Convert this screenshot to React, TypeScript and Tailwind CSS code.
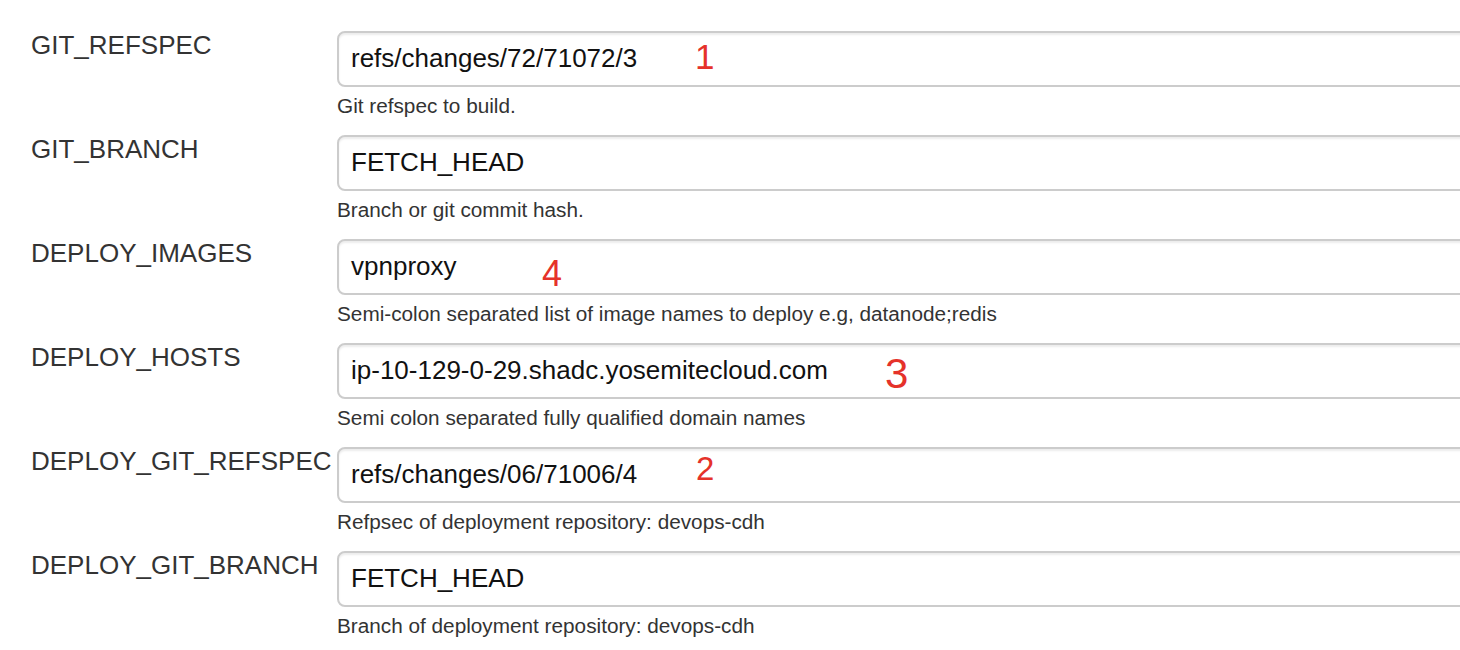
import React from 'react';

type Param = {
  name: string;
  value: string;
  help: string;
  mark?: { text: string; className: string };
};

const PARAMS: Param[] = [
  {
    name: 'GIT_REFSPEC',
    value: 'refs/changes/72/71072/3',
    help: 'Git refspec to build.',
    mark: { text: '1', className: 'left-[356px] top-[6px] text-[35px]' },
  },
  {
    name: 'GIT_BRANCH',
    value: 'FETCH_HEAD',
    help: 'Branch or git commit hash.',
  },
  {
    name: 'DEPLOY_IMAGES',
    value: 'vpnproxy',
    help: 'Semi-colon separated list of image names to deploy e.g, datanode;redis',
    mark: { text: '4', className: 'left-[203px] top-[15px] text-[36px]' },
  },
  {
    name: 'DEPLOY_HOSTS',
    value: 'ip-10-129-0-29.shadc.yosemitecloud.com',
    help: 'Semi colon separated fully qualified domain names',
    mark: { text: '3', className: 'left-[546px] top-[8px] text-[42px]' },
  },
  {
    name: 'DEPLOY_GIT_REFSPEC',
    value: 'refs/changes/06/71006/4',
    help: 'Refpsec of deployment repository: devops-cdh',
    mark: { text: '2', className: 'left-[357px] top-[3px] text-[33px]' },
  },
  {
    name: 'DEPLOY_GIT_BRANCH',
    value: 'FETCH_HEAD',
    help: 'Branch of deployment repository: devops-cdh',
  },
];

const ParamRow: React.FC<{ param: Param }> = ({ param }) => (
  <div className="flex items-start">
    <div className="w-[337px] shrink-0 pl-[31px] pt-[1px] text-[26px] leading-none text-[#333] whitespace-nowrap">
      {param.name}
    </div>
    <div className="w-[1200px] shrink-0 pb-[14.5px]">
      <div className="relative flex h-[56px] items-center rounded-[8px] border-2 border-[#cccccc] bg-white pl-[12px] text-[26px] text-[#111] shadow-[inset_0_2px_2px_rgba(0,0,0,0.075)]">
        {param.value}
        {param.mark && (
          <span className={`absolute leading-none text-[#e5322a] ${param.mark.className}`}>
            {param.mark.text}
          </span>
        )}
      </div>
      <div className="mt-[5.5px] text-[20.75px] leading-[28px] text-[#333]">{param.help}</div>
    </div>
  </div>
);

export default function App() {
  return (
    <div
      className="h-[650px] w-full overflow-hidden bg-white pt-[30.7px]"
      style={{ fontFamily: '"Liberation Sans", Arial, sans-serif' }}
    >
      {PARAMS.map((p) => (
        <ParamRow key={p.name} param={p} />
      ))}
    </div>
  );
}
